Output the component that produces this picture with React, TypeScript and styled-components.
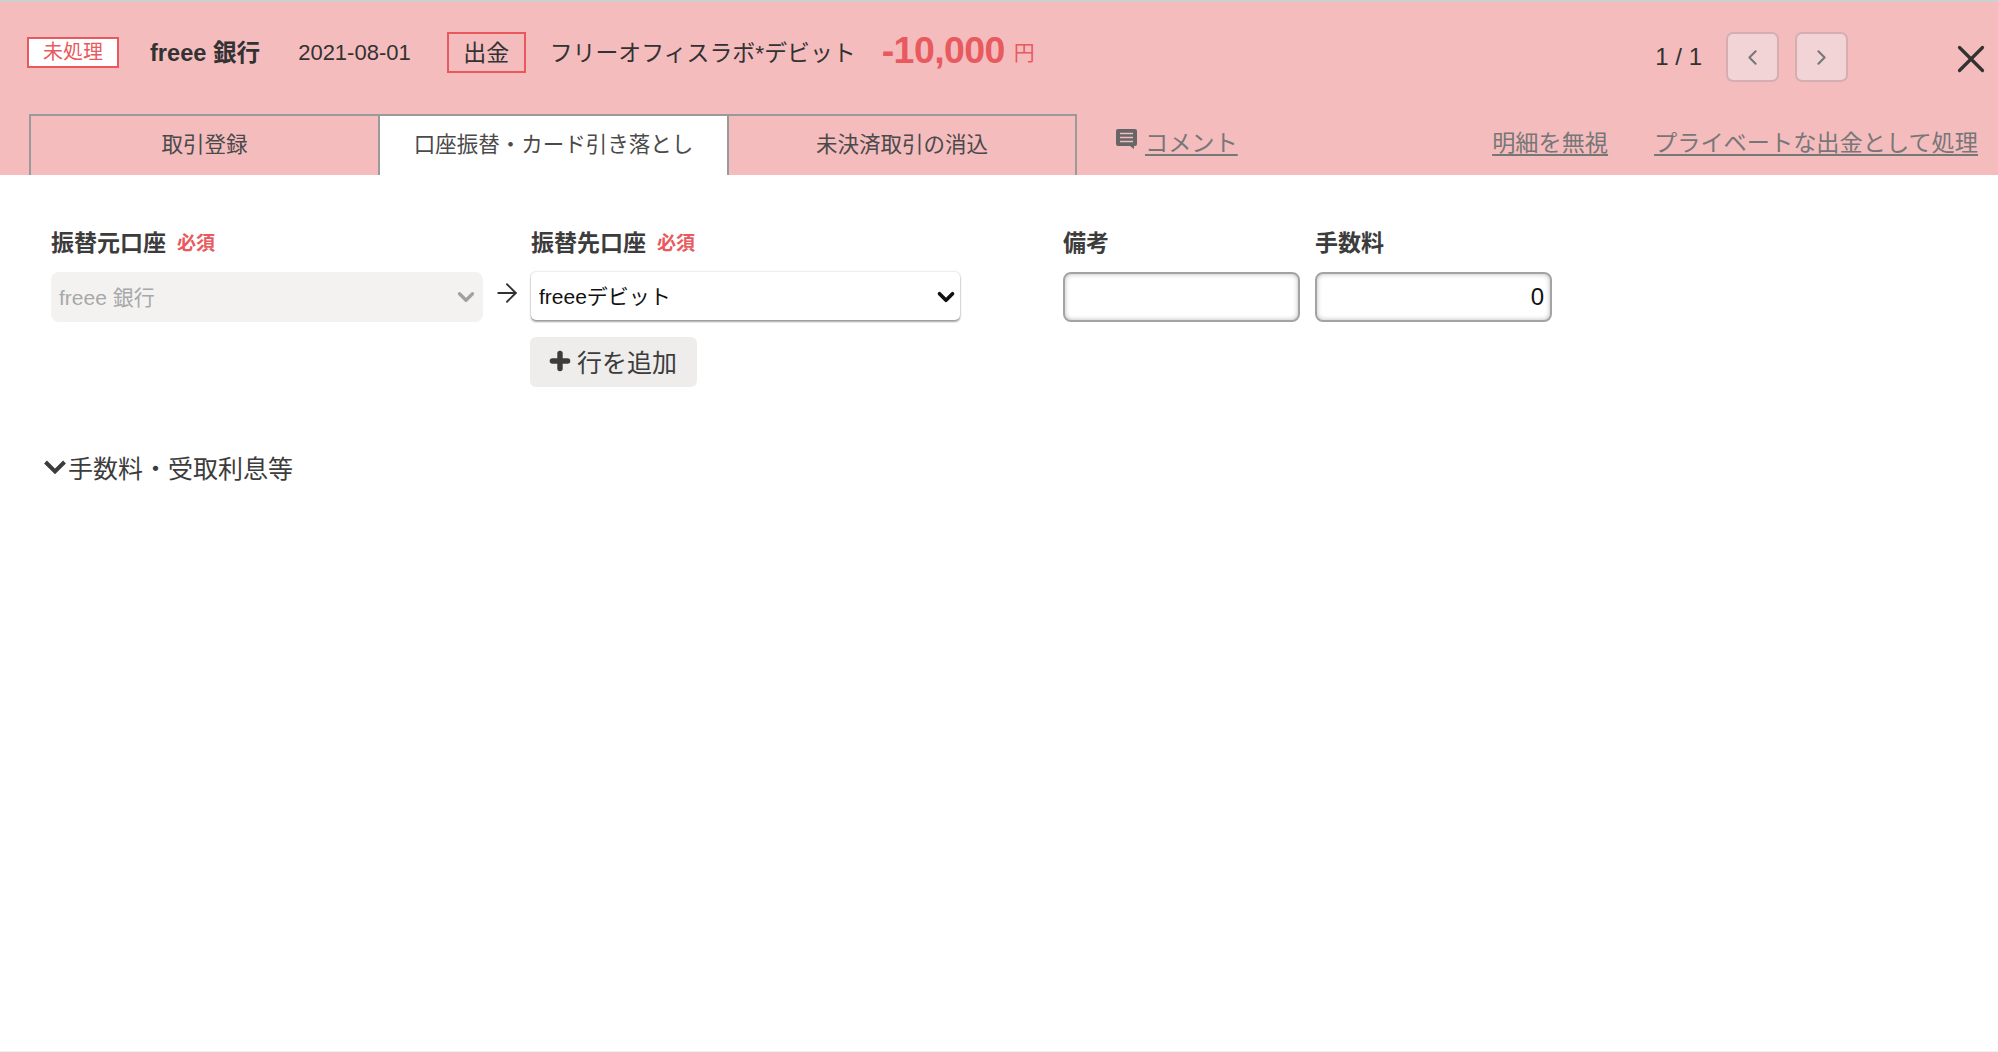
import React from "react";
import styled, { createGlobalStyle } from "styled-components";
import { ArrowRight, ChevronDown, ChevronLeft, ChevronRight, Plus, X } from "lucide-react";

const Global = createGlobalStyle`
  html, body { margin: 0; padding: 0; background: #fff; }
  body { font-family: "Liberation Sans", "Noto Sans CJK JP", sans-serif; color: #323232; overflow: hidden; }
  * { box-sizing: border-box; }
`;

const Page = styled.div`
  height: 1052px;
  display: flex;
  flex-direction: column;
  border-bottom: 1px solid #f0f0f0;
`;

const Header = styled.header`
  height: 175px;
  flex: none;
  background: #f5bcbe;
  border-top: 2px solid #cfcfcf;
  display: flex;
  flex-direction: column;
`;

const TopRow = styled.div`
  height: 112px;
  flex: none;
  padding: 30px 4px 0 27px;
  display: flex;
  align-items: flex-start;
  justify-content: space-between;
`;

const Summary = styled.div`
  height: 41px;
  display: flex;
  align-items: center;
`;

const StatusBadge = styled.span`
  width: 92px;
  height: 31px;
  border: 2px solid #e8585c;
  background: #fff;
  color: #e85a5e;
  font-size: 20px;
  line-height: 27px;
  text-align: center;
`;

const BankName = styled.strong`
  margin-left: 31px;
  padding-bottom: 3px;
  font-size: 23.6px;
  font-weight: 700;
`;

const DateText = styled.span`
  margin-left: 38px;
  font-size: 22px;
`;

const TypeBox = styled.span`
  margin-left: 36px;
  width: 79px;
  height: 41px;
  border: 2px solid #e8585c;
  font-size: 23px;
  line-height: 38px;
  text-align: center;
`;

const Description = styled.span`
  margin-left: 24px;
  padding-bottom: 4px;
  font-size: 22.9px;
`;

const Amount = styled.strong`
  margin-left: 26px;
  padding-bottom: 4px;
  color: #e85a5e;
  font-size: 37.5px;
  font-weight: 700;
  letter-spacing: -0.6px;
`;

const Yen = styled.span`
  margin-left: 9px;
  padding-bottom: 4px;
  color: #e85a5e;
  font-size: 21px;
`;

const Pager = styled.div`
  height: 50px;
  display: flex;
  align-items: center;
`;

const PageCount = styled.span`
  font-size: 24px;
  margin-right: 24px;
`;

const PageButton = styled.button`
  width: 53px;
  height: 50px;
  margin-right: 16px;
  padding: 0;
  display: flex;
  align-items: center;
  justify-content: center;
  background: #f2d4d6;
  border: 2px solid #d6aeb1;
  border-radius: 7px;
  color: #777;
`;

const CloseButton = styled.button`
  margin-left: 84px;
  width: 46px;
  height: 46px;
  margin-top: 4px;
  padding: 0;
  display: flex;
  align-items: center;
  justify-content: center;
  background: none;
  border: none;
  color: #323232;
`;

const BottomRow = styled.div`
  height: 61px;
  flex: none;
  padding: 0 20px 0 29px;
  display: flex;
  align-items: stretch;
`;

const Tabs = styled.nav`
  display: flex;
`;

const Tab = styled.div<{ $active?: boolean }>`
  width: 349px;
  display: flex;
  align-items: center;
  justify-content: center;
  padding-bottom: 6px;
  font-size: 21.5px;
  color: #4a4a4a;
  background: ${(p) => (p.$active ? "#fff" : "transparent")};
  border-top: 2px solid #9a9a9a;
  border-left: 2px solid #9a9a9a;
  &:last-child { border-right: 2px solid #9a9a9a; width: 350px; }
`;

const CommentWrap = styled.div`
  margin-left: 39px;
  padding-top: 14px;
  display: flex;
  align-items: flex-start;
  gap: 8px;
`;

const ActionLink = styled.a`
  font-size: 23.2px;
  line-height: 30px;
  color: #777;
  text-decoration: underline;
  text-underline-offset: 3px;
`;

const CommentIcon = styled.svg`
  width: 21px;
  height: 20px;
  margin-top: 1px;
`;

const Actions = styled.div`
  margin-left: auto;
  padding-top: 14px;
  display: flex;
  align-items: flex-start;
  gap: 46px;
`;

const Main = styled.main`
  flex: 1;
  padding: 51px 0 0 43px;
`;

const FormRow = styled.div`
  margin-left: 8px;
  display: flex;
  align-items: flex-start;
`;

const Column = styled.div<{ $width: number; $gapRight?: number }>`
  width: ${(p) => p.$width}px;
  margin-right: ${(p) => p.$gapRight ?? 0}px;
  flex: none;
`;

const ArrowColumn = styled.div`
  width: 48px;
  padding-top: 52px;
  display: flex;
  justify-content: center;
  color: #323232;
  flex: none;
`;

const Label = styled.div`
  height: 30px;
  display: flex;
  align-items: center;
  font-size: 23px;
  font-weight: 700;
  color: #3c3c3c;
`;

const Required = styled.span`
  margin-left: 11px;
  font-size: 19px;
  font-weight: 700;
  color: #e85a5e;
`;

const SelectWrap = styled.div`
  position: relative;
  margin-top: 16px;
`;

const Select = styled.select<{ $disabled?: boolean }>`
  appearance: none;
  display: block;
  width: 100%;
  height: ${(p) => (p.$disabled ? 50 : 48)}px;
  padding: 0 40px 0 8px;
  font-family: inherit;
  font-size: 21px;
  border: none;
  border-radius: ${(p) => (p.$disabled ? 8 : 5)}px;
  color: ${(p) => (p.$disabled ? "#a8a8a8" : "#111")};
  opacity: 1;
  background: ${(p) => (p.$disabled ? "#f3f2f1" : "#fff")};
  box-shadow: ${(p) =>
    p.$disabled ? "none" : "0 0 2px rgba(0,0,0,.25), 0 2px 2px rgba(0,0,0,.35)"};
`;

const SelectChevron = styled.span<{ $muted?: boolean }>`
  position: absolute;
  right: ${(p) => (p.$muted ? 4 : 1)}px;
  top: 12px;
  display: flex;
  pointer-events: none;
  color: ${(p) => (p.$muted ? "#a0a0a0" : "#111")};
`;

const AddButton = styled.button`
  margin: 17px 0 0 -1px;
  width: 167px;
  height: 50px;
  display: flex;
  align-items: center;
  padding: 0 0 2px 17px;
  gap: 4px;
  font-family: inherit;
  font-size: 25px;
  color: #3c3c3c;
  background: #eeedec;
  border: none;
  border-radius: 6px;
`;

const TextField = styled.input<{ $right?: boolean }>`
  display: block;
  width: 100%;
  height: 50px;
  margin-top: 16px;
  padding: 0 6px;
  font-family: inherit;
  font-size: 24px;
  color: #111;
  text-align: ${(p) => (p.$right ? "right" : "left")};
  background: #fff;
  border: 2px solid #a3a3a3;
  border-radius: 8px;
  outline: none;
  box-shadow: inset 0 0 5px rgba(0, 0, 0, 0.28);
`;

const Disclosure = styled.div`
  margin-top: 65px;
  height: 30px;
  display: flex;
  align-items: center;
  gap: 1px;
  font-size: 25px;
  color: #3c3c3c;
`;

const DisclosureIcon = styled.svg`
  width: 24px;
  height: 16px;
  flex: none;
`;

export default function App() {
  return (
    <Page>
      <Global />
      <Header>
        <TopRow>
          <Summary>
            <StatusBadge>未処理</StatusBadge>
            <BankName>freee 銀行</BankName>
            <DateText>2021-08-01</DateText>
            <TypeBox>出金</TypeBox>
            <Description>フリーオフィスラボ*デビット</Description>
            <Amount>-10,000</Amount>
            <Yen>円</Yen>
          </Summary>
          <Pager>
            <PageCount>1 / 1</PageCount>
            <PageButton aria-label="前へ"><ChevronLeft size={25} strokeWidth={2} /></PageButton>
            <PageButton aria-label="次へ"><ChevronRight size={25} strokeWidth={2} /></PageButton>
            <CloseButton aria-label="閉じる"><X size={46} strokeWidth={1.7} /></CloseButton>
          </Pager>
        </TopRow>
        <BottomRow>
          <Tabs>
            <Tab>取引登録</Tab>
            <Tab $active>口座振替・カード引き落とし</Tab>
            <Tab>未決済取引の消込</Tab>
          </Tabs>
          <CommentWrap>
            <CommentIcon viewBox="0 0 21 20">
              <path d="M2 0h17a2 2 0 0 1 2 2v13a2 2 0 0 1-2 2h-1v3l-4-3H2a2 2 0 0 1-2-2V2a2 2 0 0 1 2-2z" fill="#666" />
              <path d="M4 4.5h13M4 8.5h13M4 12.5h13" stroke="#f5bcbe" strokeWidth="1.6" />
            </CommentIcon>
            <ActionLink>コメント</ActionLink>
          </CommentWrap>
          <Actions>
            <ActionLink>明細を無視</ActionLink>
            <ActionLink>プライベートな出金として処理</ActionLink>
          </Actions>
        </BottomRow>
      </Header>
      <Main>
        <FormRow>
          <Column $width={432}>
            <Label>振替元口座<Required>必須</Required></Label>
            <SelectWrap>
              <Select $disabled disabled defaultValue="a"><option value="a">freee 銀行</option></Select>
              <SelectChevron $muted><ChevronDown size={26} strokeWidth={3} /></SelectChevron>
            </SelectWrap>
          </Column>
          <ArrowColumn><ArrowRight size={30} strokeWidth={1.5} /></ArrowColumn>
          <Column $width={429} $gapRight={103}>
            <Label>振替先口座<Required>必須</Required></Label>
            <SelectWrap>
              <Select defaultValue="b"><option value="b">freeeデビット</option></Select>
              <SelectChevron><ChevronDown size={26} strokeWidth={3.4} /></SelectChevron>
            </SelectWrap>
            <AddButton><Plus size={26} strokeWidth={5} />行を追加</AddButton>
          </Column>
          <Column $width={237} $gapRight={15}>
            <Label>備考</Label>
            <TextField readOnly value="" />
          </Column>
          <Column $width={237}>
            <Label>手数料</Label>
            <TextField $right readOnly value="0" />
          </Column>
        </FormRow>
        <Disclosure>
          <DisclosureIcon viewBox="0 0 24 16">
            <path d="M2.5 3 12 12.5 21.5 3" fill="none" stroke="#3c3c3c" strokeWidth="4" />
          </DisclosureIcon>
          手数料・受取利息等
        </Disclosure>
      </Main>
    </Page>
  );
}
